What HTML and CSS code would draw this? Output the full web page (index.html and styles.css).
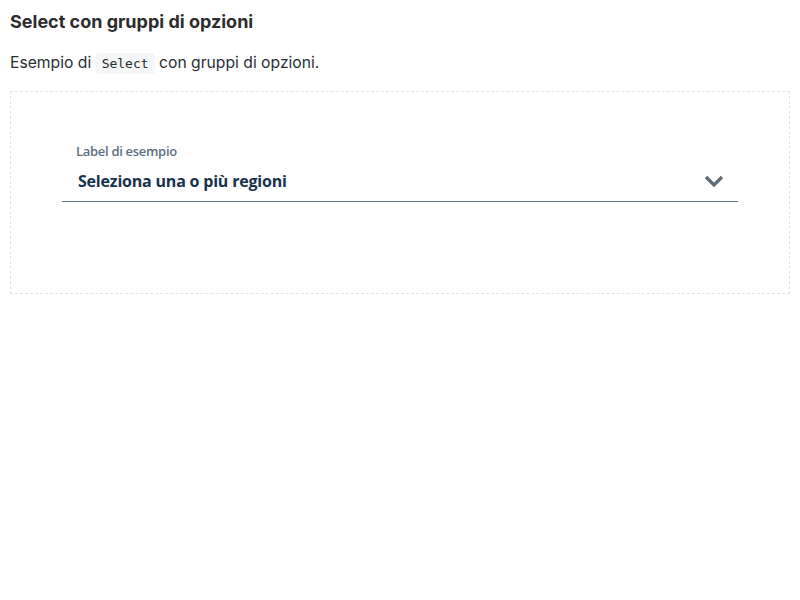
FILE: index.html
```html
<!DOCTYPE html>
<html lang="it">
<head>
<meta charset="utf-8">
<link rel="stylesheet" href="styles.css">
</head>
<body>
<h1 class="title">Select con gruppi di opzioni</h1>
<p class="intro">Esempio di <code class="code">Select</code> con gruppi di opzioni.</p>
<div class="example">
  <div class="field">
    <label class="field-label">Label di esempio</label>
    <div class="select">
      <span class="select-value">Seleziona una o più regioni</span>
      <svg class="chevron" width="20" height="14" viewBox="0 0 20 14"><path d="M2 3 L10 11 L18 3" fill="none" stroke="#5f6b76" stroke-width="3.2"/></svg>
    </div>
  </div>
</div>
</body>
</html>
```
FILE: styles.css
```css
html, body { margin: 0; padding: 0; background: #fff; }
body { padding: 10px; font-family: Inter, "Liberation Sans", sans-serif; color: #1f2933; }
.title { margin: 0; font-size: 18px; font-weight: 700; line-height: 24px; letter-spacing: 0; color: #2c2c2c; }
.intro { margin: 17px 0 0; font-size: 15.7px; line-height: 24px; color: #2a2f35; }
.code { font-family: "DejaVu Sans Mono", monospace; font-size: 13px; background: #f5f6f7; border-radius: 3px; padding: 3px 6px; color: #2b2b2b; }
.example { margin-top: 15px; border: 1px dashed #e3e3e3; padding: 50px 51px 91px; }
.field { display: flex; flex-direction: column; }
.field-label { font-family: "Open Sans", sans-serif; font-size: 13px; font-weight: 600; color: #5c6f82; padding-left: 14px; line-height: 18px; letter-spacing: -0.3px; }
.select { display: flex; align-items: center; justify-content: space-between; border-bottom: 1px solid #5c6f82; padding: 9px 14px 8px 16px; }
.select-value { font-family: "Open Sans", sans-serif; font-size: 16px; font-weight: 700; color: #17324d; line-height: 24px; letter-spacing: -0.2px; }
.chevron { display: block; }
```
